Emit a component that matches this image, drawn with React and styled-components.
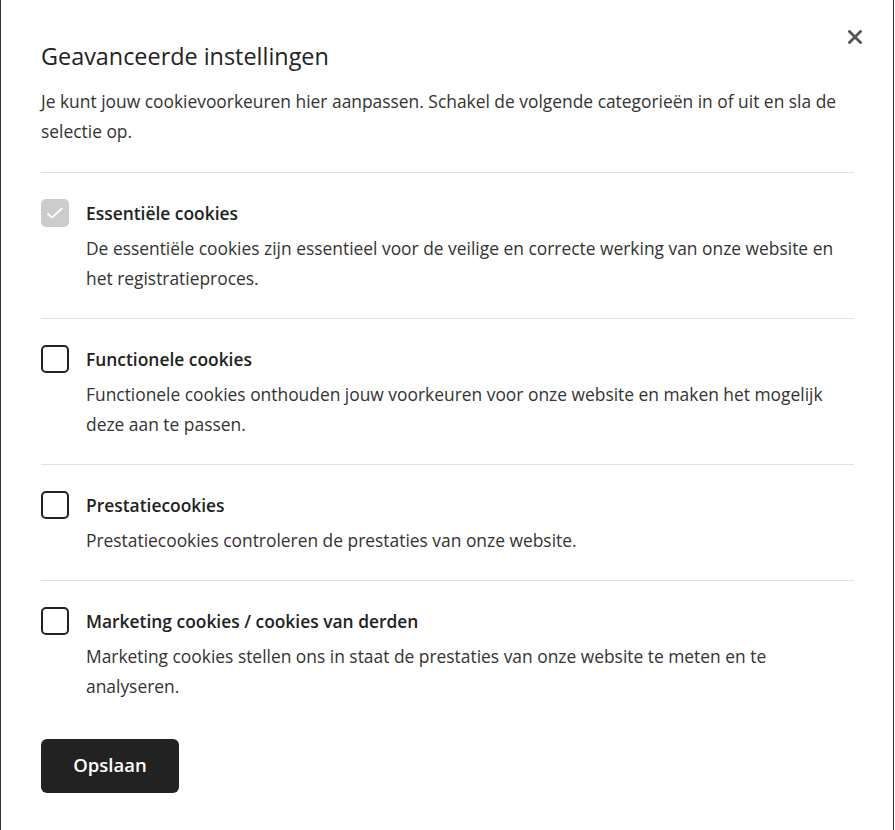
import React from 'react'
import styled, { createGlobalStyle } from 'styled-components'

const GlobalStyle = createGlobalStyle`
    html, body {
        margin: 0;
        padding: 0;
        background: #ffffff;
    }
    body {
        font-family: "Open Sans", "Noto Sans", sans-serif;
        color: #333333;
    }
`

const categories = [
    {
        title: 'Essentiële cookies',
        text: 'De essentiële cookies zijn essentieel voor de veilige en correcte werking van onze website en het registratieproces.',
        locked: true,
    },
    {
        title: 'Functionele cookies',
        text: 'Functionele cookies onthouden jouw voorkeuren voor onze website en maken het mogelijk deze aan te passen.',
    },
    {
        title: 'Prestatiecookies',
        text: 'Prestatiecookies controleren de prestaties van onze website.',
    },
    {
        title: 'Marketing cookies / cookies van derden',
        text: 'Marketing cookies stellen ons in staat de prestaties van onze website te meten en te analyseren.',
    },
]

function App() {
    return (
        <>
            <GlobalStyle />
            <Modal>
                <CloseButton aria-label="Sluiten">
                    <svg width="14" height="14" viewBox="0 0 14 14">
                        <path d="M1.5 1.5 L12.5 12.5 M12.5 1.5 L1.5 12.5" stroke="#555" strokeWidth="2.8" strokeLinecap="square" />
                    </svg>
                </CloseButton>

                <Title>Geavanceerde instellingen</Title>
                <Intro>
                    Je kunt jouw cookievoorkeuren hier aanpassen. Schakel de volgende categorieën in of uit en sla de selectie op.
                </Intro>

                <List>
                    { categories.map(cat => (
                        <Item key={ cat.title }>
                            <Box locked={ cat.locked }>
                                { cat.locked &&
                                    <CheckMark viewBox="0 0 28 28">
                                        <path d="M6.5 14.5 L11 18.5 L21.5 9" fill="none" stroke="#fff" strokeWidth="1.7" />
                                    </CheckMark>
                                }
                            </Box>
                            <ItemBody>
                                <ItemTitle>{ cat.title }</ItemTitle>
                                <ItemText>{ cat.text }</ItemText>
                            </ItemBody>
                        </Item>
                    )) }
                </List>

                <SaveButton>Opslaan</SaveButton>
            </Modal>
        </>
    )
}

export default App

const Modal = styled.div`
    position: relative;
    box-sizing: border-box;
    width: 894px;
    min-height: 100vh;
    padding: 40px 39px 37px 40px;
    border-left: 1px solid #333;
    border-right: 1px solid #333;
    background: #fff;
`

const CloseButton = styled.button`
    position: absolute;
    top: 30px;
    right: 31px;
    width: 14px;
    height: 14px;
    padding: 0;
    border: none;
    background: none;
    display: flex;
    cursor: pointer;
`

const Title = styled.h2`
    margin: 0;
    font-size: 23.4px;
    font-weight: 400;
    line-height: 32px;
    color: #222;
`

const Intro = styled.p`
    margin: 14px 0 0;
    font-size: 17.4px;
    line-height: 30px;
    color: #333;
`

const List = styled.div`
    margin-top: 26px;
    border-top: 1px solid #e0e0e0;
`

const Item = styled.div`
    display: flex;
    gap: 17px;
    padding: 25px 0;
    border-bottom: 1px solid #e0e0e0;

    &:last-child {
        border-bottom: none;
    }
`

const Box = styled.span`
    position: relative;
    flex: none;
    box-sizing: border-box;
    width: 28px;
    height: 28px;
    margin-top: 1px;
    border-radius: 5px;
    border: 2px solid ${props => props.locked ? '#cccccc' : '#222'};
    background: ${props => props.locked ? '#cccccc' : '#fff'};
`

const CheckMark = styled.svg`
    position: absolute;
    top: -2px;
    left: -2px;
    width: 28px;
    height: 28px;
`

const ItemBody = styled.div`
    display: flex;
    flex-direction: column;
    gap: 5px;
`

const ItemTitle = styled.div`
    font-size: 17.4px;
    font-weight: 600;
    line-height: 30px;
    color: #222;
`

const ItemText = styled.div`
    font-size: 17.4px;
    line-height: 30px;
    color: #333;
`

const SaveButton = styled.button`
    margin-top: 13px;
    height: 54px;
    width: 138px;
    padding: 0 0 3px;
    border: none;
    border-radius: 6px;
    background: #222;
    color: #fff;
    font-family: "Open Sans", "Noto Sans", sans-serif;
    font-size: 18.5px;
    font-weight: 600;
    cursor: pointer;
`
